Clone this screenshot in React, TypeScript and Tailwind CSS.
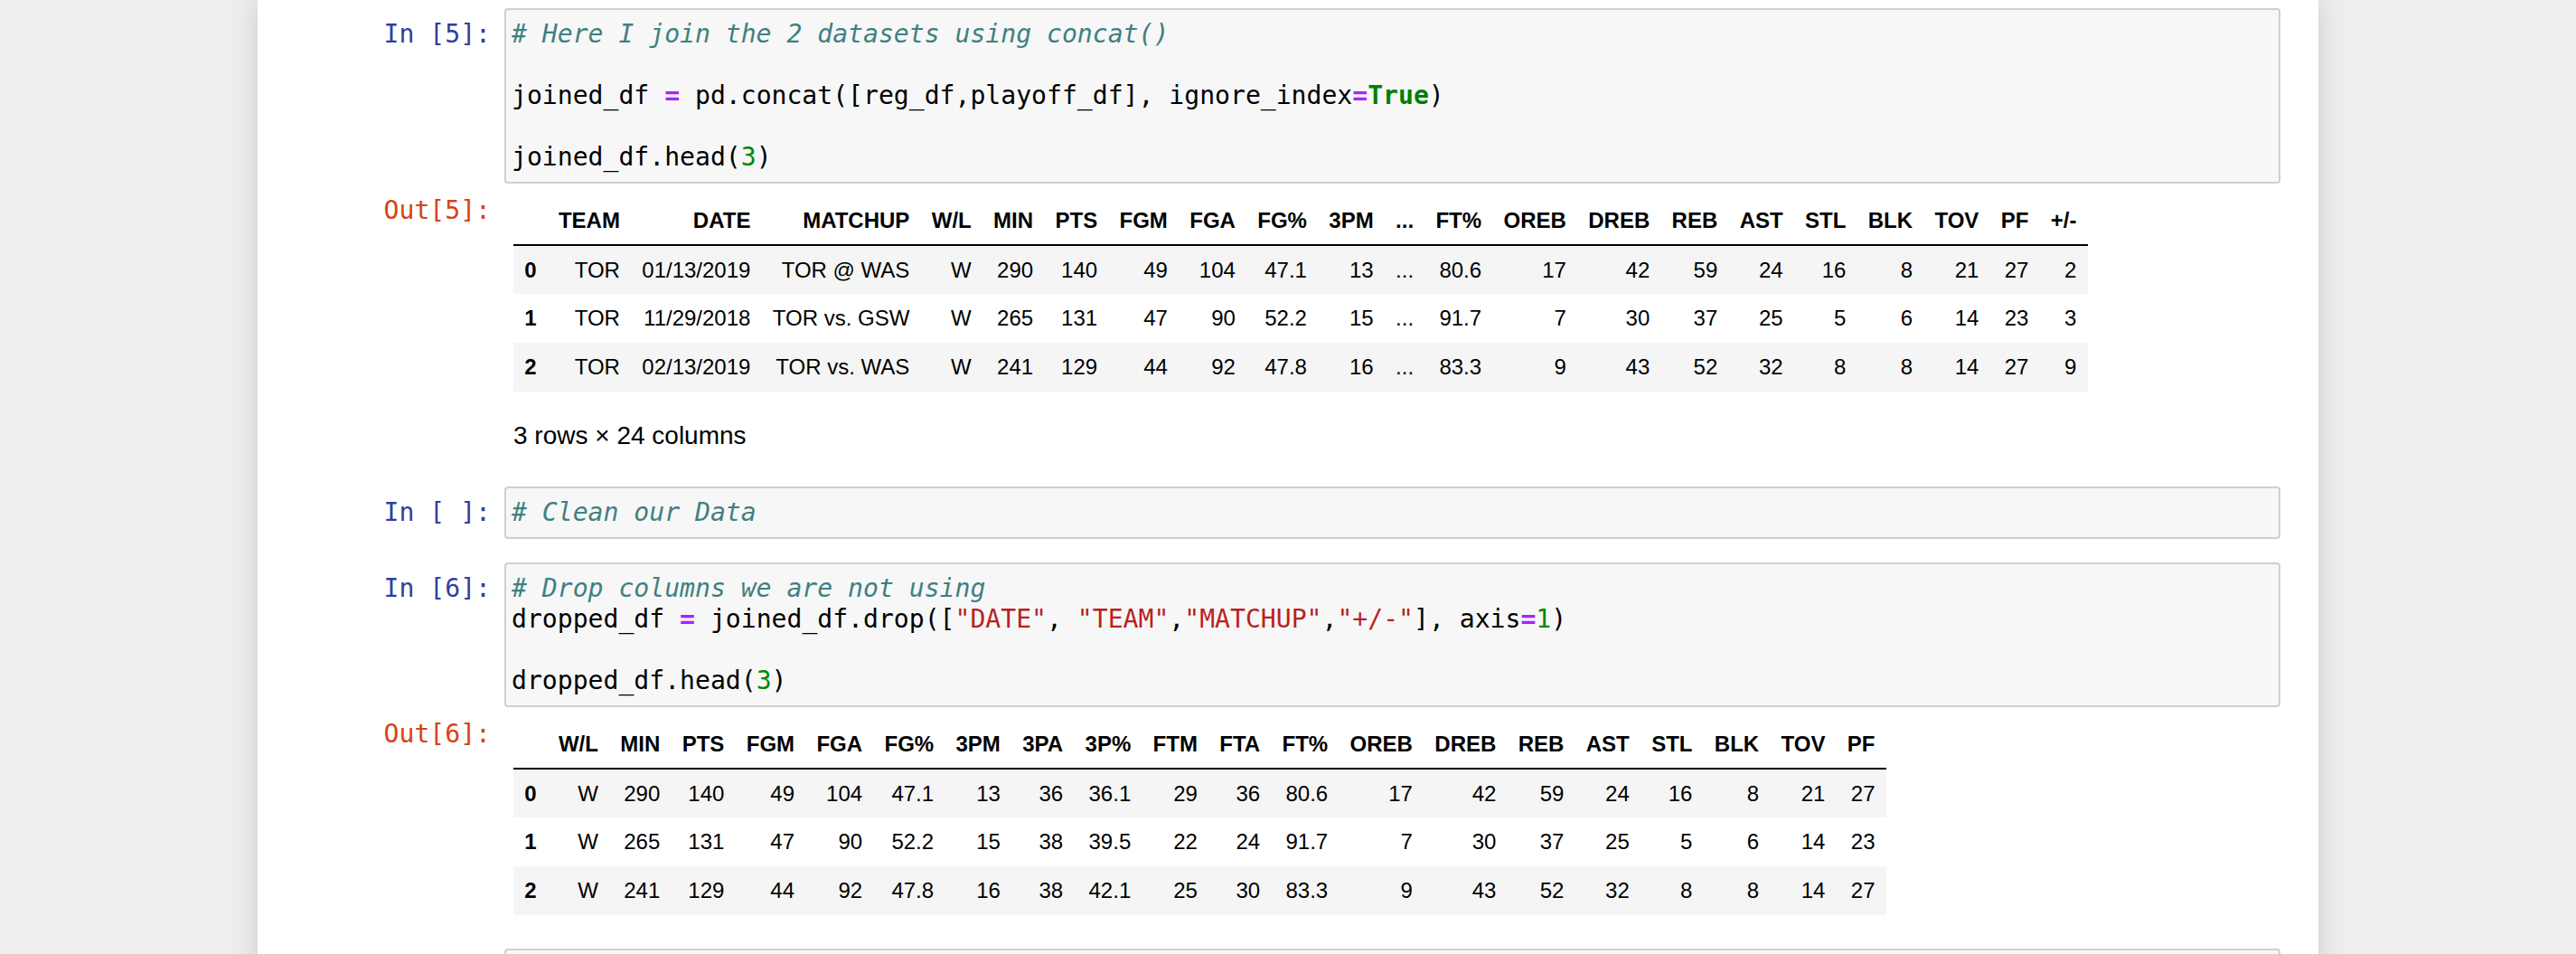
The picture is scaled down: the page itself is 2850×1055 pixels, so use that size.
import React from "react";

const MONO = "font-['DejaVu_Sans_Mono',monospace] text-[28.1px] leading-[34px]";

const Cm = ({ children }: { children: React.ReactNode }) => (
  <span className="italic text-[#408080]">{children}</span>
);
const Op = ({ children }: { children: React.ReactNode }) => (
  <span className="font-bold text-[#AA22FF]">{children}</span>
);
const Num = ({ children }: { children: React.ReactNode }) => (
  <span className="text-[#008800]">{children}</span>
);
const Kw = ({ children }: { children: React.ReactNode }) => (
  <span className="font-bold text-[#008000]">{children}</span>
);
const Str = ({ children }: { children: React.ReactNode }) => (
  <span className="text-[#BA2121]">{children}</span>
);

const Line = ({ children }: { children?: React.ReactNode }) => (
  <div className="h-[34px] whitespace-pre">{children ?? "\u00a0"}</div>
);

function InputCell({ label, children }: { label: string; children: React.ReactNode }) {
  return (
    <div className="flex">
      <div className={`w-[233px] shrink-0 pr-[15px] pt-[12px] text-right text-[#303F9F] whitespace-pre ${MONO}`}>
        {label}
      </div>
      <div
        className={`flex-1 rounded-[4px] border-2 border-[#cfcfcf] bg-[#f7f7f7] py-[10px] pl-[6px] text-black ${MONO}`}
      >
        {children}
      </div>
    </div>
  );
}

function OutputCell({ label, children }: { label: string; children: React.ReactNode }) {
  return (
    <div className="flex">
      <div className={`w-[233px] shrink-0 pr-[15px] pt-[13px] text-right text-[#D84315] whitespace-pre ${MONO}`}>
        {label}
      </div>
      <div className="flex-1 pl-[10px]">{children}</div>
    </div>
  );
}

function DataTable({ headers, rows }: { headers: string[]; rows: string[][] }) {
  return (
    <table className="mt-[14px] border-collapse font-['Liberation_Sans',Arial,sans-serif] text-[24px] text-black">
      <thead>
        <tr>
          <th className="h-[54px] border-b-2 border-black px-[12.2px]"></th>
          {headers.map((h, i) => (
            <th key={i} className="h-[54px] border-b-2 border-black px-[12.2px] text-right font-bold whitespace-nowrap">
              {h}
            </th>
          ))}
        </tr>
      </thead>
      <tbody>
        {rows.map((r, i) => (
          <tr key={i} className={i % 2 === 0 ? "bg-[#f5f5f5]" : "bg-white"}>
            <th className="h-[54px] px-[12.2px] text-left font-bold">{i}</th>
            {r.map((v, j) => (
              <td key={j} className="h-[54px] px-[12.2px] text-right whitespace-nowrap">
                {v}
              </td>
            ))}
          </tr>
        ))}
      </tbody>
    </table>
  );
}

const h1 = ["TEAM", "DATE", "MATCHUP", "W/L", "MIN", "PTS", "FGM", "FGA", "FG%", "3PM", "...", "FT%", "OREB", "DREB", "REB", "AST", "STL", "BLK", "TOV", "PF", "+/-"];
const r1 = [
  ["TOR", "01/13/2019", "TOR @ WAS", "W", "290", "140", "49", "104", "47.1", "13", "...", "80.6", "17", "42", "59", "24", "16", "8", "21", "27", "2"],
  ["TOR", "11/29/2018", "TOR vs. GSW", "W", "265", "131", "47", "90", "52.2", "15", "...", "91.7", "7", "30", "37", "25", "5", "6", "14", "23", "3"],
  ["TOR", "02/13/2019", "TOR vs. WAS", "W", "241", "129", "44", "92", "47.8", "16", "...", "83.3", "9", "43", "52", "32", "8", "8", "14", "27", "9"],
];

const h2 = ["W/L", "MIN", "PTS", "FGM", "FGA", "FG%", "3PM", "3PA", "3P%", "FTM", "FTA", "FT%", "OREB", "DREB", "REB", "AST", "STL", "BLK", "TOV", "PF"];
const r2 = [
  ["W", "290", "140", "49", "104", "47.1", "13", "36", "36.1", "29", "36", "80.6", "17", "42", "59", "24", "16", "8", "21", "27"],
  ["W", "265", "131", "47", "90", "52.2", "15", "38", "39.5", "22", "24", "91.7", "7", "30", "37", "25", "5", "6", "14", "23"],
  ["W", "241", "129", "44", "92", "47.8", "16", "38", "42.1", "25", "30", "83.3", "9", "43", "52", "32", "8", "8", "14", "27"],
];

export default function App() {
  return (
    <div className="h-[1055px] overflow-hidden bg-[#eeeeee]">
      <div className="mx-auto min-h-[1055px] w-[2280px] bg-white pl-[40px] pr-[42px] pt-[9px] shadow-[0px_0px_24px_2px_rgba(87,87,87,0.2)]">
        <InputCell label="In [5]:">
          <Line>
            <Cm># Here I join the 2 datasets using concat()</Cm>
          </Line>
          <Line />
          <Line>
            joined_df <Op>=</Op> pd.concat([reg_df,playoff_df], ignore_index<Op>=</Op>
            <Kw>True</Kw>)
          </Line>
          <Line />
          <Line>
            joined_df.head(<Num>3</Num>)
          </Line>
        </InputCell>
        <OutputCell label="Out[5]:">
          <DataTable headers={h1} rows={r1} />
          <div className="mt-[32px] font-['Liberation_Sans',Arial,sans-serif] text-[28px] leading-[34px] text-black">
            3 rows × 24 columns
          </div>
        </OutputCell>

        <div className="mt-[39px]">
          <InputCell label="In [ ]:">
            <Line>
              <Cm># Clean our Data</Cm>
            </Line>
          </InputCell>
        </div>

        <div className="mt-[26px]">
          <InputCell label="In [6]:">
            <Line>
              <Cm># Drop columns we are not using</Cm>
            </Line>
            <Line>
              dropped_df <Op>=</Op> joined_df.drop([<Str>"DATE"</Str>, <Str>"TEAM"</Str>,<Str>"MATCHUP"</Str>,
              <Str>"+/-"</Str>], axis<Op>=</Op>
              <Num>1</Num>)
            </Line>
            <Line />
            <Line>
              dropped_df.head(<Num>3</Num>)
            </Line>
          </InputCell>
          <OutputCell label="Out[6]:">
            <DataTable headers={h2} rows={r2} />
          </OutputCell>
        </div>

        <div className="mt-[37px]">
          <InputCell label={" "}>
            <Line />
          </InputCell>
        </div>
      </div>
    </div>
  );
}
